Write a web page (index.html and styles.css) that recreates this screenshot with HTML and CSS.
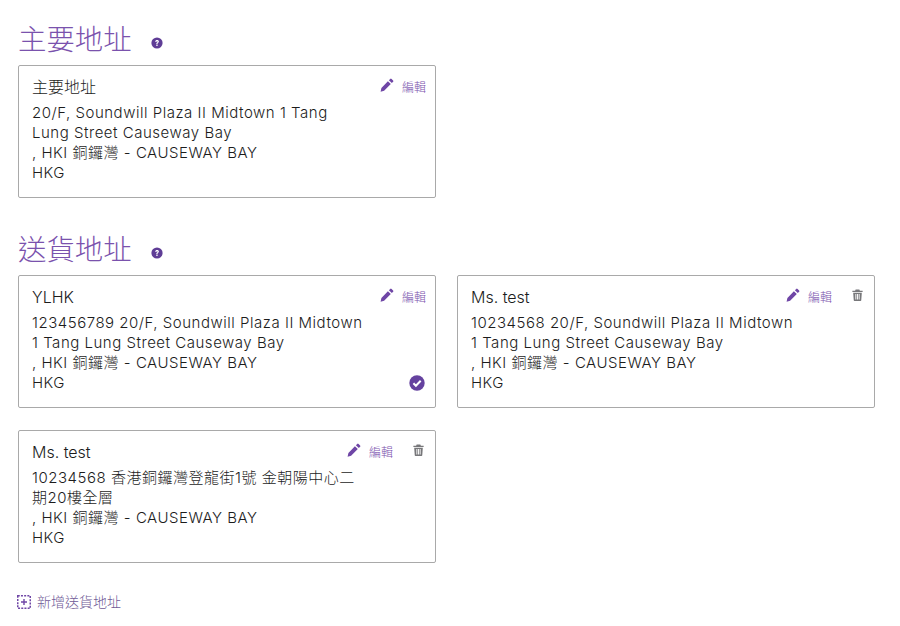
FILE: index.html
```html
<!DOCTYPE html>
<html lang="zh-Hant">
<head>
<meta charset="utf-8">
<title>地址</title>
<link rel="stylesheet" href="styles.css">
</head>
<body>
<svg class="defs" width="0" height="0" aria-hidden="true">
  <symbol id="pencil" viewBox="0 0 14 14"><path d="M10.2.9a1 1 0 0 1 1.4 0l1.5 1.5a1 1 0 0 1 0 1.4l-1.3 1.3-2.9-2.9zM7.9 3.2l2.9 2.9-6.7 6.7-3.5.9.8-3.6z" fill="currentColor"/></symbol>
  <symbol id="trash" viewBox="0 0 12 13"><path d="M4 .6h4l.6 1.2h3v1.5H.4V1.8h3zM1.3 4.1h9.4l-.6 8.2a.8.8 0 0 1-.8.7H2.7a.8.8 0 0 1-.8-.7zM3.7 5.4v6h1v-6zm1.8 0v6h1v-6zm1.8 0v6h1v-6z" fill="currentColor" fill-rule="evenodd"/></symbol>
  <symbol id="help" viewBox="0 0 12 12"><circle cx="6" cy="6" r="5.6" fill="currentColor"/><path d="M4.2 4.7c0-1 .8-1.6 1.9-1.6s1.8.6 1.8 1.5c0 1.4-1.4 1.3-1.4 2.3H5.3c0-1.6 1.3-1.5 1.3-2.2 0-.3-.2-.5-.6-.5s-.6.2-.7.7zM5.3 7.6h1.3v1.3H5.3z" fill="#fff"/></symbol>
</svg>

<main class="page">
  <section class="section">
    <h2 class="heading">主要地址 <svg class="help"><use href="#help"/></svg></h2>
    <div class="grid">
      <article class="card">
        <div class="actions">
          <a class="edit"><svg class="pencil"><use href="#pencil"/></svg><span>編輯</span></a>
        </div>
        <h3 class="name">主要地址</h3>
        <p class="address">20/F, Soundwill Plaza II Midtown 1 Tang<br>Lung Street Causeway Bay<br>, HKI 銅鑼灣 - CAUSEWAY BAY<br>HKG</p>
      </article>
    </div>
  </section>

  <section class="section">
    <h2 class="heading">送貨地址 <svg class="help"><use href="#help"/></svg></h2>
    <div class="grid">
      <article class="card">
        <div class="actions">
          <a class="edit"><svg class="pencil"><use href="#pencil"/></svg><span>編輯</span></a>
        </div>
        <h3 class="name">YLHK</h3>
        <p class="address">123456789 20/F, Soundwill Plaza II Midtown<br>1 Tang Lung Street Causeway Bay<br>, HKI 銅鑼灣 - CAUSEWAY BAY<br>HKG</p>
        <svg class="check" viewBox="0 0 16 16"><circle cx="8" cy="8" r="7.7" fill="currentColor"/><path d="M4.4 8.3l2.5 2.5 4.8-5" fill="none" stroke="#fff" stroke-width="2"/></svg>
      </article>
      <article class="card">
        <div class="actions">
          <a class="edit"><svg class="pencil"><use href="#pencil"/></svg><span>編輯</span></a>
          <svg class="trash"><use href="#trash"/></svg>
        </div>
        <h3 class="name">Ms. test</h3>
        <p class="address">10234568 20/F, Soundwill Plaza II Midtown<br>1 Tang Lung Street Causeway Bay<br>, HKI 銅鑼灣 - CAUSEWAY BAY<br>HKG</p>
      </article>
      <article class="card">
        <div class="actions">
          <a class="edit"><svg class="pencil"><use href="#pencil"/></svg><span>編輯</span></a>
          <svg class="trash"><use href="#trash"/></svg>
        </div>
        <h3 class="name">Ms. test</h3>
        <p class="address">10234568 香港銅鑼灣登龍街1號 金朝陽中心二<br>期20樓全層<br>, HKI 銅鑼灣 - CAUSEWAY BAY<br>HKG</p>
      </article>
    </div>
  </section>

  <a class="add">
    <svg class="add-icon" viewBox="0 0 14 14"><rect x=".75" y=".75" width="12.5" height="12.5" fill="none" stroke="currentColor" stroke-width="1.5" stroke-dasharray="2 1.2"/><path d="M7 4v6M4 7h6" stroke="currentColor" stroke-width="1.4"/></svg>
    <span>新增送貨地址</span>
  </a>
</main>
</body>
</html>
```

FILE: styles.css
```css
html, body {
  margin: 0;
  padding: 0;
  background: #fff;
}

body {
  font-family: "Inter", "Noto Sans CJK TC", sans-serif;
  color: #1c1c1c;
}

.defs {
  position: absolute;
}

.page {
  width: 857px;
  padding: 19px 0 0 18px;
}

.section + .section {
  margin-top: 31px;
}

.heading {
  box-sizing: border-box;
  margin: 0 0 11px;
  height: 35px;
  padding-top: 1px;
  display: flex;
  align-items: center;
  font-size: 28.4px;
  font-weight: 300;
  line-height: 33px;
  color: #7a52ad;
  font-family: "Noto Sans CJK TC", sans-serif;
}

.help {
  width: 12px;
  height: 12px;
  margin: 11px 0 0 19px;
  color: #5f3d96;
}

.grid {
  display: grid;
  grid-template-columns: 418px 418px;
  column-gap: 21px;
  row-gap: 22px;
}

.card {
  position: relative;
  box-sizing: border-box;
  height: 133px;
  padding: 11px 13px 0;
  border: 1px solid #a9a9a9;
  border-radius: 2px;
}

.actions {
  float: right;
  display: flex;
  align-items: flex-start;
  gap: 20px;
  margin: 3px -4px 0 0;
}

.edit {
  display: flex;
  align-items: flex-start;
  gap: 8px;
  font-size: 12px;
  font-weight: 300;
  line-height: 16px;
  color: #7a52ad;
}

.pencil {
  width: 14px;
  height: 14px;
  margin-top: -2px;
  color: #6f46a6;
}

.trash {
  width: 11px;
  height: 12px;
  margin: -1px 2px 0 0;
  color: #77777a;
}

.name {
  margin: 0 0 6px;
  font-size: 16px;
  font-weight: 300;
  line-height: 20px;
}

.address {
  margin: 0;
  font-size: 15px;
  font-weight: 300;
  line-height: 20px;
  letter-spacing: 0.52px;
}

.check {
  position: absolute;
  right: 10px;
  bottom: 16px;
  width: 16px;
  height: 16px;
  color: #65429f;
}

.add {
  display: flex;
  align-items: center;
  gap: 6px;
  margin: 29px 0 0 -1px;
  font-size: 14px;
  font-weight: 300;
  line-height: 20px;
  color: #6f5a96;
}

.add-icon {
  width: 14px;
  height: 14px;
  color: #6f46a6;
}
```
